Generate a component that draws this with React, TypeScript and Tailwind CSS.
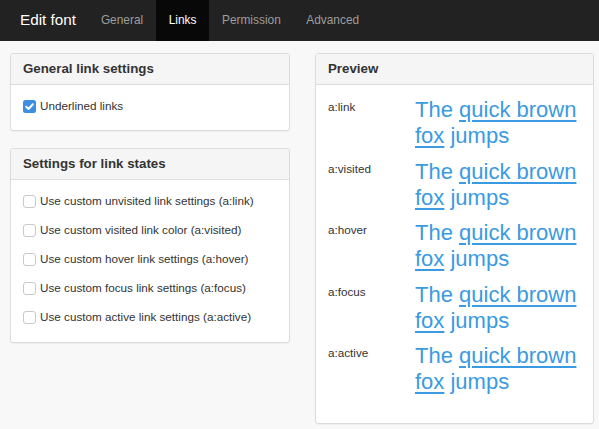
import React from "react";

const tabs = [
  { label: "General", active: false },
  { label: "Links", active: true },
  { label: "Permission", active: false },
  { label: "Advanced", active: false },
];

const linkStates = [
  "Use custom unvisited link settings (a:link)",
  "Use custom visited link color (a:visited)",
  "Use custom hover link settings (a:hover)",
  "Use custom focus link settings (a:focus)",
  "Use custom active link settings (a:active)",
];

const previews = ["a:link", "a:visited", "a:hover", "a:focus", "a:active"];

const Checkbox = ({ checked }: { checked?: boolean }) =>
  checked ? (
    <svg width="13" height="13" viewBox="0 0 13 13" className="shrink-0">
      <rect x="0" y="0" width="13" height="13" rx="2.5" fill="#3b8ee2" />
      <path d="M3.2 6.8 L5.5 9 L9.9 4.2" stroke="#fff" strokeWidth="2" fill="none" strokeLinecap="round" strokeLinejoin="round" />
    </svg>
  ) : (
    <span className="block w-[13px] h-[13px] shrink-0 rounded-[3px] border border-[#c9c9c9] bg-white" />
  );

const Panel = ({ title, children, className = "" }: { title: string; children: React.ReactNode; className?: string }) => (
  <div className={`rounded-[3px] border border-[#dcdcdc] bg-white shadow-[0_1px_1px_rgba(0,0,0,0.04)] ${className}`}>
    <div className="h-[31px] flex items-center px-[12px] bg-[#f5f5f5] border-b border-[#dcdcdc] rounded-t-[3px]">
      <h3 className="text-[13.3px] font-bold text-[#333]">{title}</h3>
    </div>
    {children}
  </div>
);

export default function App() {
  return (
    <div className="min-h-screen bg-[#f8f8f8] text-[#333]" style={{ fontFamily: '"Liberation Sans", Arial, sans-serif' }}>
      {/* navbar */}
      <nav className="h-[41px] bg-[#222] flex items-stretch pl-[20px]">
        <div className="flex items-center text-white text-[15.3px]">Edit font</div>
        <ul className="flex items-stretch ml-[12px]">
          {tabs.map((t) => (
            <li
              key={t.label}
              className={`flex items-center px-[12.75px] text-[11.9px] ${t.active ? "bg-[#080808] text-white" : "text-[#9d9d9d]"}`}
            >
              {t.label}
            </li>
          ))}
        </ul>
      </nav>

      <div className="flex gap-[25px] pl-[10px] pt-[12px]">
        {/* left column */}
        <div className="w-[280px] flex flex-col gap-[17px]">
          <Panel title="General link settings">
            <div className="pt-[11px] pb-[14px] px-[12px]">
              <label className="flex items-center gap-[4px] h-[20px] text-[11.7px]">
                <Checkbox checked />
                <span>Underlined links</span>
              </label>
            </div>
          </Panel>

          <Panel title="Settings for link states">
            <div className="pt-[11px] pb-[15px] px-[12px] flex flex-col gap-[9px]">
              {linkStates.map((s) => (
                <label key={s} className="flex items-center gap-[4px] h-[20px] text-[11.7px]">
                  <Checkbox />
                  <span>{s}</span>
                </label>
              ))}
            </div>
          </Panel>
        </div>

        {/* right column */}
        <div className="w-[279px]">
          <Panel title="Preview">
            <div className="pt-[12px] pb-[18px] pl-[12px] pr-[12px]">
              {previews.map((p) => (
                <div key={p} className="flex mb-[9.5px]">
                  <div className="w-[87px] shrink-0 text-[11.7px] leading-[20px]">{p}</div>
                  <div className="text-[22px] leading-[26px] text-[#3a9ae2]">
                    The <span className="underline decoration-[1.5px] underline-offset-[3px]">quick brown fox</span> jumps
                  </div>
                </div>
              ))}
            </div>
          </Panel>
        </div>
      </div>
    </div>
  );
}
